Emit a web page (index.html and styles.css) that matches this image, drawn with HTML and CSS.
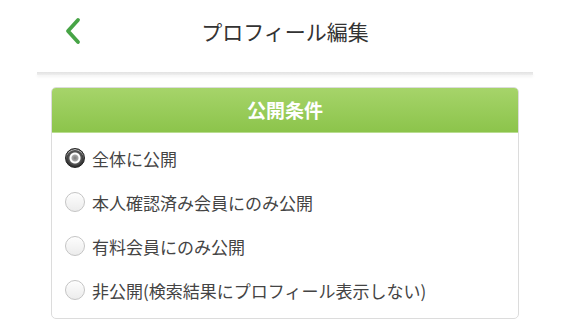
FILE: index.html
```html
<!DOCTYPE html>
<html lang="ja">

<head>
    <meta charset="UTF-8">
    <meta name="viewport" content="width=device-width, initial-scale=1.0">
    <title>プロフィール編集</title>
    <link rel="stylesheet" href="styles.css">
</head>

<body>
    <!-- ヘッダー -->
    <div class="header">
        <a class="back" href="#">
            <svg width="18" height="28" viewBox="0 0 18 28">
                <polyline points="14,3 4,14 14,25" fill="none" stroke="#47a446" stroke-width="3.8" stroke-linecap="round" stroke-linejoin="round" />
            </svg>
        </a>
        <div class="title">プロフィール編集</div>
        <div></div>
    </div>
    <div class="divider"></div>

    <!-- 公開条件 -->
    <div class="panel">
        <div class="panel-head">公開条件</div>
        <div class="panel-body">
            <label class="option">
                <span class="radio checked"></span>
                全体に公開
            </label>
            <label class="option">
                <span class="radio"></span>
                本人確認済み会員にのみ公開
            </label>
            <label class="option">
                <span class="radio"></span>
                有料会員にのみ公開
            </label>
            <label class="option">
                <span class="radio"></span>
                非公開(検索結果にプロフィール表示しない)
            </label>
        </div>
    </div>
</body>

</html>
```

FILE: styles.css
```css
/* 全体 */
body {
    margin: 0;
    background: #fff;
    font-family: "Noto Sans CJK JP", "Liberation Sans", sans-serif;
    color: #333;
}

/* ヘッダー */
.header {
    display: grid;
    grid-template-columns: 1fr auto 1fr;
    align-items: center;
    height: 62px;
}

.back {
    display: flex;
    padding-left: 64px;
}

.title {
    font-size: 21px;
    color: #333;
}

.divider {
    margin: 10px 37px 0;
    height: 3px;
    background: linear-gradient(#e2e2e2, #efefef);
    box-shadow: 0 2px 3px rgba(0, 0, 0, 0.05);
}

/* パネル */
.panel {
    margin: 12px 51px 0;
    border: 1px solid #dcdcdc;
    border-radius: 5px;
    overflow: hidden;
}

.panel-head {
    height: 44px;
    line-height: 44px;
    text-align: center;
    color: #fff;
    font-size: 19px;
    font-weight: bold;
    background: linear-gradient(#a6d46a, #8cc44b);
    border-bottom: 1px solid #b9dd90;
}

.panel-body {
    padding: 3px 0 6px;
}

.option {
    display: flex;
    align-items: center;
    gap: 7px;
    height: 44px;
    padding-left: 13px;
    font-size: 17px;
    color: #444;
}

/* ラジオボタン */
.radio {
    width: 18px;
    height: 18px;
    border-radius: 50%;
    border: 1px solid #c4c4c4;
    background: linear-gradient(#fdfdfd, #ececec);
    box-shadow: inset 0 1px 1px rgba(255, 255, 255, 0.8);
}

.radio.checked {
    border-color: #222;
    background: radial-gradient(circle at 50% 50%, #7a7a7a 0, #a8a8a8 3px, #fff 4px, #fff 5px, #5a5a5a 6px, #262626 9px);
}
```
